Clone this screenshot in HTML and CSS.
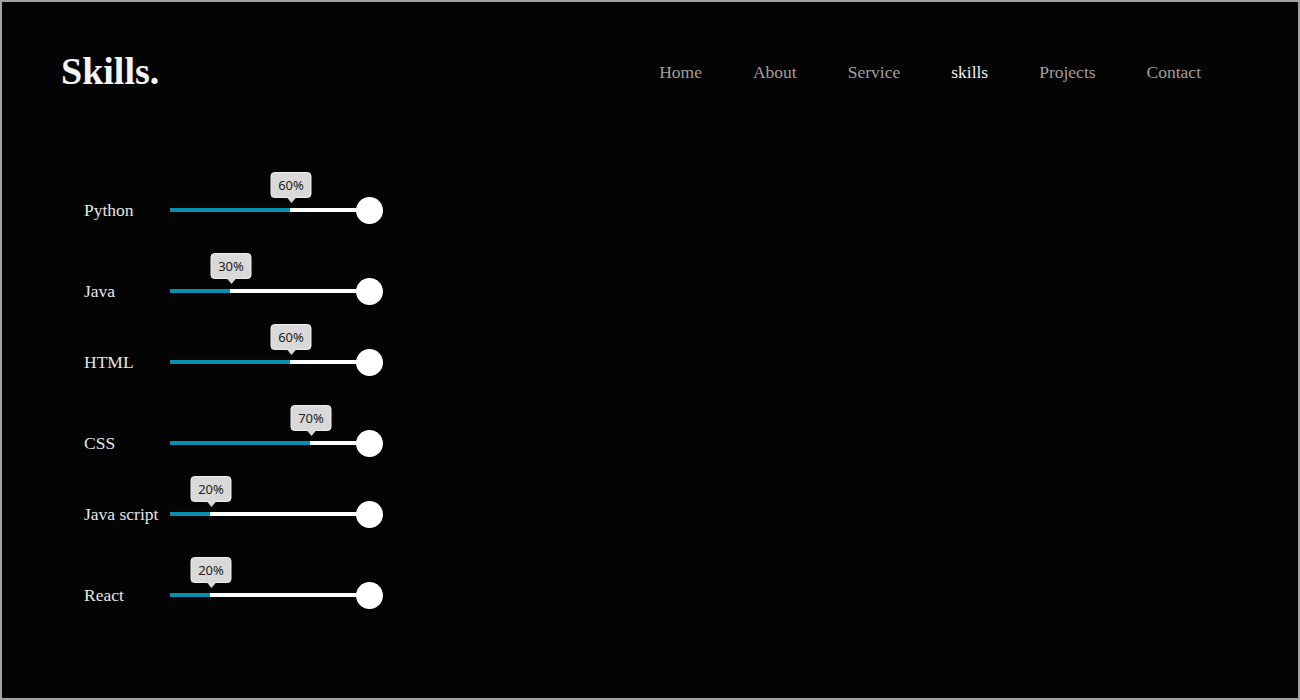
FILE: index.html
```html
<!DOCTYPE html>
<html lang="en">
<head>
<meta charset="utf-8">
<title>Skills</title>
<link rel="stylesheet" href="styles.css">
</head>
<body>
<div class="page">
  <header class="header">
    <div class="logo">Skills.</div>
    <nav class="nav">
      <a class="nav-link" href="#">Home</a>
      <a class="nav-link" href="#">About</a>
      <a class="nav-link" href="#">Service</a>
      <a class="nav-link active" href="#">skills</a>
      <a class="nav-link" href="#">Projects</a>
      <a class="nav-link" href="#">Contact</a>
    </nav>
  </header>
  <section class="skills">
    <div class="skill">
      <span class="skill-name">Python</span>
      <div class="track"><div class="fill" style="width:60%"></div><div class="tip" style="left:60%">60%</div><div class="knob"></div></div>
    </div>
    <div class="skill">
      <span class="skill-name">Java</span>
      <div class="track"><div class="fill" style="width:30%"></div><div class="tip" style="left:30%">30%</div><div class="knob"></div></div>
    </div>
    <div class="skill">
      <span class="skill-name">HTML</span>
      <div class="track"><div class="fill" style="width:60%"></div><div class="tip" style="left:60%">60%</div><div class="knob"></div></div>
    </div>
    <div class="skill">
      <span class="skill-name">CSS</span>
      <div class="track"><div class="fill" style="width:70%"></div><div class="tip" style="left:70%">70%</div><div class="knob"></div></div>
    </div>
    <div class="skill">
      <span class="skill-name">Java script</span>
      <div class="track"><div class="fill" style="width:20%"></div><div class="tip" style="left:20%">20%</div><div class="knob"></div></div>
    </div>
    <div class="skill">
      <span class="skill-name">React</span>
      <div class="track"><div class="fill" style="width:20%"></div><div class="tip" style="left:20%">20%</div><div class="knob"></div></div>
    </div>
  </section>
</div>
</body>
</html>
```
FILE: styles.css
```css
* { box-sizing: border-box; }

html, body {
  margin: 0;
  padding: 0;
  background: #040404;
}

.page {
  width: 1300px;
  height: 700px;
  border: 2px solid #a3a3a3;
  background: #040404;
  font-family: "Liberation Serif", "Times New Roman", serif;
  overflow: hidden;
}

.header {
  display: flex;
  justify-content: space-between;
  align-items: center;
  padding: 47px 97px 0 59px;
  height: 91px;
}

.logo {
  font-size: 38px;
  line-height: 44px;
  font-weight: bold;
  color: #f4f4f4;
}

.nav {
  display: flex;
  gap: 51px;
  padding-top: 2px;
}

.nav-link {
  font-size: 17.5px;
  line-height: 22px;
  color: #a39c9c;
  text-decoration: none;
}

.nav-link.active {
  color: #f2f2f2;
}

.skills {
  display: flex;
  flex-direction: column;
  margin-top: 102px;
  padding-left: 82px;
}

.skill {
  display: flex;
  align-items: center;
  height: 30px;
}

.skill:nth-child(odd) { margin-bottom: 51px; }
.skill:nth-child(even) { margin-bottom: 41px; }

.skill-name {
  width: 86px;
  font-size: 17.5px;
  line-height: 22px;
  color: #e4e4e4;
  white-space: nowrap;
}

.track {
  position: relative;
  width: 200px;
  height: 4px;
  background: #ffffff;
}

.fill {
  height: 100%;
  background: #0a8fae;
}

.knob {
  position: absolute;
  right: -13px;
  top: 50%;
  width: 27px;
  height: 27px;
  margin-top: -13.5px;
  border-radius: 50%;
  background: #ffffff;
}

.tip {
  position: absolute;
  bottom: 14px;
  transform: translateX(-50%);
  width: 41px;
  height: 26px;
  margin-left: 1px;
  background: #d9d9d9;
  border: 1px solid #efefef;
  border-radius: 4px;
  color: #222222;
  font-family: "Noto Sans", "Open Sans", sans-serif;
  font-size: 13px;
  line-height: 24px;
  text-align: center;
}

.tip::after {
  content: "";
  position: absolute;
  left: 50%;
  top: 100%;
  margin-left: -5px;
  border-left: 5px solid transparent;
  border-right: 5px solid transparent;
  border-top: 6px solid #d9d9d9;
}
```
